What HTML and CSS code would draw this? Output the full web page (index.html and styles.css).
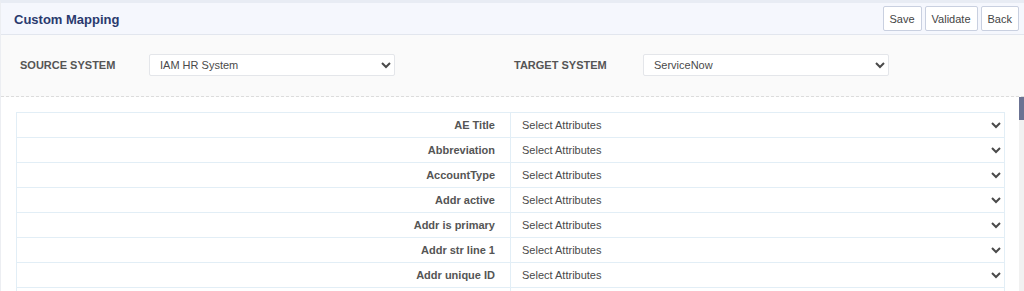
FILE: index.html
```html
<!DOCTYPE html>
<html lang="en">
  <head>
    <meta charset="UTF-8" />
    <meta name="viewport" content="width=device-width, initial-scale=1.0" />
    <title>Custom Mapping</title>
    <link rel="stylesheet" href="styles.css">
  </head>
  <body>
    <div class="page">
      <div class="header">
        <h1 class="title">Custom Mapping</h1>
        <div class="actions">
          <button class="btn">Save</button>
          <button class="btn">Validate</button>
          <button class="btn">Back</button>
        </div>
      </div>

      <div class="filters">
        <div class="field">
          <label for="source">SOURCE SYSTEM</label>
          <select id="source" class="sel">
            <option>IAM HR System</option>
          </select>
        </div>
        <div class="field">
          <label for="target">TARGET SYSTEM</label>
          <select id="target" class="sel">
            <option>ServiceNow</option>
          </select>
        </div>
      </div>

      <div class="body">
        <div class="mapping">
          <table class="mapTable">
            <tbody class="rows"></tbody>
          </table>
        </div>
        <!-- fake scrollbar, list is long -->
        <div class="scrollbar"><div class="thumb"></div></div>
      </div>
    </div>

    <script>
      // attribute list for the mapping table
      const attrs = [
        "AE Title", "Abbreviation", "AccountType", "Addr active",
        "Addr is primary", "Addr str line 1", "Addr unique ID",
        "Addr str line 2", "Addr city", "Addr state", "Addr zip",
        "Addr country", "Birth date", "Building", "Business phone",
        "City", "Company", "Cost center", "Country", "Department",
        "Display name", "Email", "Employee ID", "Employee number",
        "First name", "Gender", "Hire date", "Home phone", "Job code",
        "Last name", "Location", "Manager", "Middle name", "Mobile phone",
        "Name prefix", "Name suffix", "Nickname", "Office", "Org unit",
        "Preferred language", "Region", "Start date", "State", "Status",
        "Street", "Supervisor", "Termination date", "Time zone", "Title",
        "User ID", "User name", "User type", "Work phone", "Zip",
        "Active", "Created", "Updated", "Source", "Division", "Grade",
        "Cost code", "Shift", "Badge", "Floor", "Desk", "Extension"
      ];

      const rows = document.querySelector(".rows");
      attrs.forEach((a) => {
        rows.innerHTML += `
          <tr>
            <td class="attrName">${a}</td>
            <td class="attrSel">
              <select class="sel wide"><option>Select Attributes</option></select>
            </td>
          </tr>`;
      });
    </script>
  </body>
</html>
```

FILE: styles.css
```css
* {
  box-sizing: border-box;
}
html,
body {
  margin: 0;
  height: 100%;
}
body {
  font-family: "Liberation Sans", Arial, sans-serif;
  color: #444;
  background-color: #fff;
  overflow: hidden;
}
.page {
  display: flex;
  flex-direction: column;
  height: 100%;
  border-top: 3px solid #e8ecf4;
  border-left: 1px solid #eceef2;
}
.header {
  display: flex;
  align-items: center;
  justify-content: space-between;
  height: 32px;
  padding: 0 5px 0 13px;
  background-color: #f5f7fd;
  border-bottom: 1px solid #e2e6ee;
  flex-shrink: 0;
}
.title {
  margin: 0;
  padding-top: 1px;
  font-size: 13px;
  font-weight: bold;
  color: #2a3a6e;
}
.actions {
  display: flex;
  gap: 3px;
}
.btn {
  height: 25px;
  padding: 0 6px;
  font-family: "Liberation Sans", Arial, sans-serif;
  font-size: 11px;
  color: #444;
  background-color: #fff;
  border: 1px solid #c9d0e0;
  border-radius: 2px;
  cursor: pointer;
}
.filters {
  display: flex;
  align-items: center;
  height: 62px;
  padding: 0 0 1px 19px;
  background-color: #fafafa;
  border-bottom: 1px dashed #dcdcdc;
  flex-shrink: 0;
}
.field {
  display: flex;
  align-items: center;
  width: 494px;
}
.field label {
  width: 129px;
  font-size: 11px;
  font-weight: bold;
  color: #555;
}
.sel {
  width: 246px;
  height: 22px;
  padding: 0 6px;
  font-family: "Liberation Sans", Arial, sans-serif;
  font-size: 11px;
  color: #4a4a4a;
  background-color: #fff;
  border: 1px solid #e4e6ea;
  border-radius: 2px;
  outline: none;
}
.body {
  display: flex;
  flex: 1;
  min-height: 0;
}
.mapping {
  flex: 1;
  overflow: hidden;
  padding: 15px 14px 0 15px;
}
.scrollbar {
  width: 5px;
  background-color: #f1f1f1;
  flex-shrink: 0;
}
.thumb {
  height: 23px;
  background-color: #6b7393;
}
.mapTable {
  width: 100%;
  border-collapse: collapse;
  table-layout: fixed;
}
.mapTable td {
  height: 25px;
  padding: 0;
  border: 1px solid #e2eef6;
}
.attrName {
  padding-right: 15px !important;
  text-align: right;
  font-size: 11px;
  font-weight: bold;
  color: #555;
}
.attrSel .wide {
  display: block;
  width: 100%;
  height: 23px;
  padding: 0 8px 0 7px;
  border: none;
}
```
